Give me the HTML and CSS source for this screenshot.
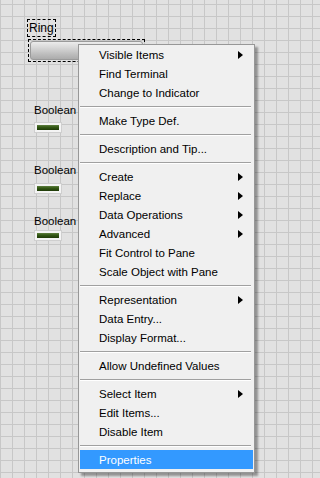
FILE: index.html
```html
<!DOCTYPE html>
<html lang="en">
  <head>
    <meta charset="UTF-8" />
    <title>Front Panel</title>
    <link rel="stylesheet" href="styles.css">
  </head>

  <body>
    <div class="panel">
      <div class="ring-label">Ring</div>
      <div class="ring">
        <div class="ring-bar"></div>
      </div>

      <div class="bool b1">
        <div class="bool-label">Boolean</div>
        <div class="led"><span></span></div>
      </div>
      <div class="bool b2">
        <div class="bool-label">Boolean</div>
        <div class="led"><span></span></div>
      </div>
      <div class="bool b3">
        <div class="bool-label">Boolean</div>
        <div class="led"><span></span></div>
      </div>

      <ul class="menu">
        <li class="item sub">Visible Items</li>
        <li class="item">Find Terminal</li>
        <li class="item">Change to Indicator</li>
        <li class="sep"></li>
        <li class="item">Make Type Def.</li>
        <li class="sep"></li>
        <li class="item">Description and Tip...</li>
        <li class="sep"></li>
        <li class="item sub">Create</li>
        <li class="item sub">Replace</li>
        <li class="item sub">Data Operations</li>
        <li class="item sub">Advanced</li>
        <li class="item">Fit Control to Pane</li>
        <li class="item">Scale Object with Pane</li>
        <li class="sep"></li>
        <li class="item sub">Representation</li>
        <li class="item">Data Entry...</li>
        <li class="item">Display Format...</li>
        <li class="sep"></li>
        <li class="item">Allow Undefined Values</li>
        <li class="sep"></li>
        <li class="item sub">Select Item</li>
        <li class="item">Edit Items...</li>
        <li class="item">Disable Item</li>
        <li class="sep"></li>
        <li class="item active">Properties</li>
      </ul>
    </div>
  </body>
</html>
```

FILE: styles.css
```css
* {
  margin: 0;
  padding: 0;
  box-sizing: border-box;
}

body {
  font-family: "Liberation Sans", Arial, sans-serif;
  font-size: 11.5px;
  color: #000;
  background: #e1e1e1;
}

/* front panel grid, 12px cells */
.panel {
  position: relative;
  width: 320px;
  height: 478px;
  overflow: hidden;
  background-color: #e1e1e1;
  background-image:
    linear-gradient(to right, #c7c7c7 1px, transparent 1px),
    linear-gradient(to bottom, #c7c7c7 1px, transparent 1px);
  background-size: 12px 12px;
  background-position: 0 4px;
}

.ring-label {
  position: absolute;
  left: 27px;
  top: 19px;
  width: 29px;
  height: 18px;
  border: 1px dashed #000;
  padding: 1px 0 0 1px;
  font-size: 12px;
  line-height: 15px;
}

.ring {
  position: absolute;
  left: 28px;
  top: 39px;
  width: 117px;
  height: 23px;
  border: 1px dashed #000;
  padding: 1px;
}

.ring-bar {
  height: 100%;
  border-radius: 3px;
  border: 1px solid #9a9a9a;
  background: linear-gradient(to bottom, #ececec 0%, #d6d6d6 35%, #bebebe 70%, #acacac 100%);
}

.bool {
  position: absolute;
  left: 34px;
}

.b1 { top: 103px; }
.b2 { top: 163px; }
.b3 { top: 214px; }

.bool-label {
  line-height: 14px;
}

.b1 .led { margin-top: 5px; }
.b2 .led { margin-top: 6px; }
.b3 .led { margin-top: 2px; }

.led {
  width: 28px;
  height: 11px;
  padding: 2px;
  background: #f4f4f4;
  border: 1px solid #cfcfcf;
}

.led span {
  display: block;
  height: 100%;
  background: linear-gradient(to bottom, #5f8040 0%, #355a16 40%, #1f3a08 100%);
}

/* context menu */
.menu {
  position: absolute;
  left: 78px;
  top: 44px;
  width: 177px;
  height: 429px;
  list-style: none;
  background: #f0f0f0;
  border: 1px solid #979797;
  padding: 0 0 3px;
  box-shadow: 3px 3px 2px rgba(0, 0, 0, 0.35);
}

.item {
  display: flex;
  align-items: center;
  height: 19px;
  margin: 0 1px;
  padding: 0 10px 0 19px;
}

.sub::after {
  content: "";
  margin-left: auto;
  border-left: 5px solid #000;
  border-top: 4px solid transparent;
  border-bottom: 4px solid transparent;
}

.active {
  background: #3399ff;
  color: #fff;
}

.sep {
  height: 9px;
  padding-top: 4px;
  margin: 0 3px 0 1px;
}

.sep::before {
  content: "";
  display: block;
  height: 1px;
  background: #a0a0a0;
  border-bottom: 1px solid #fff;
  box-sizing: content-box;
}
```
